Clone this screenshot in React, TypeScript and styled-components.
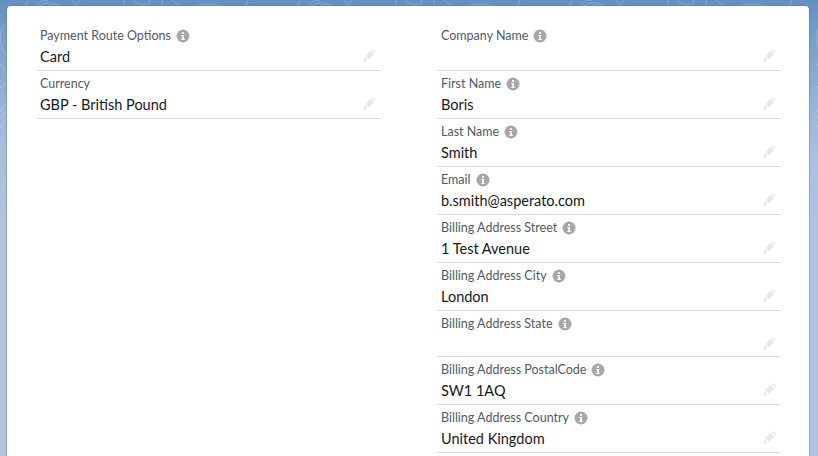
import styled, { createGlobalStyle } from 'styled-components';

interface Field {
  label: string;
  value?: string;
  info?: boolean;
  short?: boolean;
}

const leftFields: Field[] = [
  { label: 'Payment Route Options', value: 'Card', info: true },
  { label: 'Currency', value: 'GBP - British Pound' },
];

const rightFields: Field[] = [
  { label: 'Company Name', info: true },
  { label: 'First Name', value: 'Boris', info: true },
  { label: 'Last Name', value: 'Smith', info: true },
  { label: 'Email', value: 'b.smith@asperato.com', info: true },
  { label: 'Billing Address Street', value: '1 Test Avenue', info: true },
  { label: 'Billing Address City', value: 'London', info: true },
  { label: 'Billing Address State', info: true, short: true },
  { label: 'Billing Address PostalCode', value: 'SW1 1AQ', info: true },
  { label: 'Billing Address Country', value: 'United Kingdom', info: true },
];

const GlobalStyle = createGlobalStyle`
  html, body {
    margin: 0;
    padding: 0;
    height: 456px;
    overflow: hidden;
  }
  body {
    font-family: Lato, "Open Sans", sans-serif;
  }
`;

const Page = styled.div`
  position: relative;
  width: 818px;
  height: 456px;
  overflow: hidden;
  padding: 6px 9px 0 7px;
  box-sizing: border-box;
  background: linear-gradient(180deg, #6490c0 0, #7ea2cc 50px, #98b3d8 100px, #a8bfe0 150px, #afc4e3 220px, #afc4e3 100%);
`;

const Contours = styled.svg`
  position: absolute;
  top: 0;
  left: 0;
  pointer-events: none;
`;

const Card = styled.div`
  position: relative;
  height: 470px;
  box-sizing: border-box;
  background: #fff;
  border-radius: 4px;
  box-shadow: 0 0 1px 1px rgba(90, 110, 140, 0.35);
  padding: 17px 28px 0 29px;
  display: grid;
  grid-template-columns: 345px 344px;
  justify-content: space-between;
  align-items: start;
`;

const Column = styled.div`
  display: flex;
  flex-direction: column;
`;

const Row = styled.div<{ $short?: boolean }>`
  position: relative;
  box-sizing: border-box;
  height: ${(p) => (p.$short ? 46 : 48)}px;
  padding: 4px 4px 0;
  border-bottom: 1px solid #dddbda;
`;

const LabelLine = styled.div`
  display: flex;
  align-items: center;
  height: 16px;
  margin-top: 1px;
  font-size: 12.5px;
  line-height: 16px;
  color: #4f5a68;
`;

const InfoBadge = styled.svg`
  width: 14px;
  height: 14px;
  margin-left: 5px;
  flex: none;
`;

const Value = styled.div`
  margin-top: 3px;
  height: 20px;
  font-size: 14.5px;
  line-height: 20px;
  color: #16181c;
`;

const EditIcon = styled.svg<{ $short?: boolean }>`
  position: absolute;
  right: 5px;
  bottom: ${(p) => (p.$short ? 5 : 7)}px;
  width: 14px;
  height: 14px;
`;

const Info = () => (
  <InfoBadge viewBox="0 0 14 14" aria-hidden="true">
    <circle cx="7" cy="7" r="6.5" fill="#aaa8a6" />
    <rect x="6" y="3" width="2" height="2" rx="0.6" fill="#fff" />
    <path d="M5.3 6h2.7v4h.8v1H5.3v-1h.9V7h-.9z" fill="#fff" />
  </InfoBadge>
);

const Pencil = ({ short }: { short?: boolean }) => (
  <EditIcon $short={short} viewBox="0 0 14 14" aria-hidden="true">
    <path d="M3.2 7.2 8.6 1.8l3.6 3.6-5.4 5.4z" fill="#e9e9e9" />
    <path d="M9.4 1l.6-.5c.3-.3.7-.3 1 0l2.5 2.5c.3.3.3.7 0 1l-.5.6z" fill="#e9e9e9" />
    <path d="M2.5 8l3.5 3.5L.6 13.4z" fill="#eeeeee" />
  </EditIcon>
);

const FieldRow = ({ field }: { field: Field }) => (
  <Row $short={field.short}>
    <LabelLine>
      {field.label}
      {field.info && <Info />}
    </LabelLine>
    <Value>{field.value}</Value>
    <Pencil short={field.short} />
  </Row>
);

export default function App() {
  return (
    <>
      <GlobalStyle />
      <Page>
        {/* faint map lines, the tile repeats every 272px */}
        <Contours width="818" height="160" viewBox="0 0 818 160" fill="none">
          <defs>
            <pattern id="contour" width="272" height="160" patternUnits="userSpaceOnUse">
              <g stroke="#ffffff" strokeOpacity="0.2">
                <path d="M28 0c-2 3-3 5-2 7M36 7c1-4 6-7 12-7M38 7c6-5 18-6 22 0M46 7c4-3 9-3 12 0" />
                <path d="M72 0c2 3 4 5 5 7M80 0c-2 2-3 5-3 7" />
                <path d="M124 0c0 3 0 5-1 7M134 0c2 4 8 6 14 4 1-1 2-3 2-4M162 0c1 3 0 5-1 7" />
                <path d="M172 0c4 3 8 6 10 7M196 6c10-2 22-2 32 1M246 7c0-2 1-4 2-7" />
                <path d="M4 25C-2 34 0 48 5 54M0 64c3 2 5 6 6 10M0 88l7-6M0 112l6-8" />
                <path d="M0 128l4-6" />
                <path d="M0 118l7-8" />
              </g>
            </pattern>
          </defs>
          <rect width="818" height="160" fill="url(#contour)" />
        </Contours>
        <Card>
          <Column>
            {leftFields.map((f) => (
              <FieldRow key={f.label} field={f} />
            ))}
          </Column>
          <Column>
            {rightFields.map((f) => (
              <FieldRow key={f.label} field={f} />
            ))}
          </Column>
        </Card>
      </Page>
    </>
  );
}
